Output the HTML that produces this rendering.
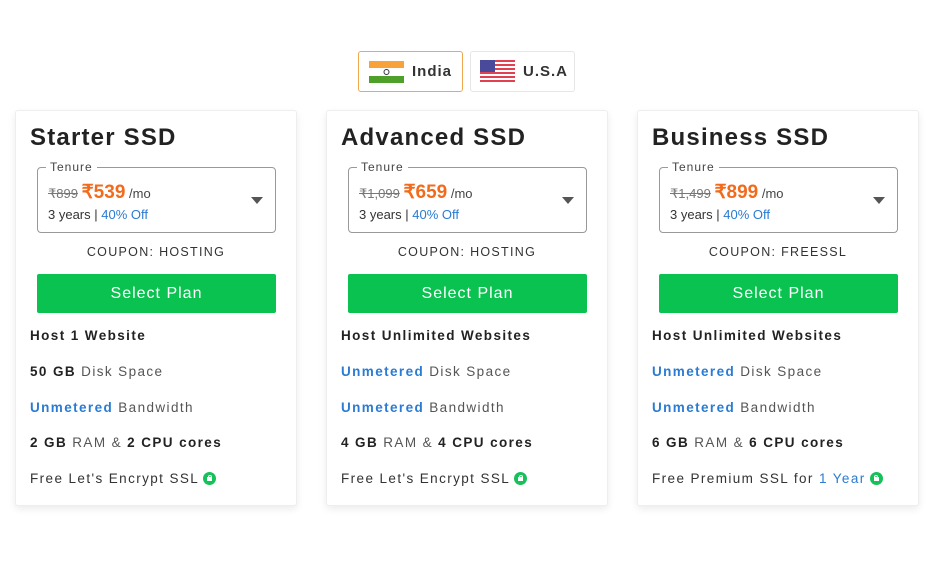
<!DOCTYPE html>
<html><head><style>
*{box-sizing:border-box;margin:0;padding:0}
body{width:936px;height:569px;background:#fff;font-family:"Liberation Sans",sans-serif;color:#222;position:relative;overflow:hidden}
.tab{position:absolute;top:51px;height:41px;border:1px solid #e6e6e6;border-radius:3px;display:flex;align-items:center;font-size:15px;font-weight:bold;color:#333;letter-spacing:1px}
.card{position:absolute;top:110px;width:282px;height:396px;border:1px solid #eee;border-radius:3px;box-shadow:0 3px 8px rgba(0,0,0,.08);background:#fff}
.card h2{position:absolute;left:14px;top:13px;font-size:24px;font-weight:bold;color:#222;letter-spacing:1.2px}
.ten{position:absolute;left:21px;top:56px;width:239px;height:66px;border:1px solid #999;border-radius:4px}
.ten .lab{position:absolute;left:8px;top:-8px;background:#fff;padding:0 4px;font-size:12px;color:#444;letter-spacing:1px}
.ten .pr{position:absolute;left:10px;top:13px;font-size:13px;color:#444}
.ten .pr s{color:#777}
.ten .pr b{color:#f26b1d;font-size:19px}
.ten .yr{position:absolute;left:10px;top:39px;font-size:13px;color:#333}
.ten .yr span{color:#2a7bd3}
.ten .ar{position:absolute;right:12px;top:29px;width:0;height:0;border-left:6px solid transparent;border-right:6px solid transparent;border-top:7px solid #555}
.cp{position:absolute;left:0;width:100%;top:134px;text-align:center;font-size:12.5px;letter-spacing:1.3px;color:#333}
.btn{position:absolute;left:21px;top:163px;width:239px;height:39px;background:#0ac24f;border-radius:2px;color:#fff;font-size:16px;text-align:center;line-height:39px;letter-spacing:1px}
.f{position:absolute;left:14px;font-size:13.5px;letter-spacing:1.4px;color:#555}
.f b{color:#222}
.f .u{color:#2a7bd3;font-weight:bold}
.f .l{color:#2a7bd3}
.lock{display:inline-block;width:13px;height:13px;border-radius:50%;background:#16c05a;vertical-align:-2px;margin-left:4px;position:relative}
.lock:after{content:"";position:absolute;left:4px;top:5px;width:5px;height:4px;background:#fff}
.lock:before{content:"";position:absolute;left:4.5px;top:2.5px;width:2px;height:3px;border:1px solid #fff;border-bottom:none;border-radius:2px 2px 0 0}
</style></head><body>
<div class="tab" style="left:358px;width:105px;border-color:#f0a850">
<svg style="margin:0 8px 0 10px" width="35" height="22"><rect width="35" height="7" fill="#f7a23a"/><rect y="7" width="35" height="8" fill="#fff"/><rect y="15" width="35" height="7" fill="#4fa02a"/><circle cx="17.5" cy="11" r="2.5" fill="none" stroke="#334" stroke-width="1"/></svg>India</div>
<div class="tab" style="left:470px;width:105px">
<svg style="margin:0 8px 0 9px" width="35" height="23"><g fill="#e04050"><rect y="0" width="35" height="2"/><rect y="4" width="35" height="2"/><rect y="8" width="35" height="2"/><rect y="12" width="35" height="2"/><rect y="16" width="35" height="2"/><rect y="20" width="35" height="2"/></g><rect width="15" height="12" fill="#4a4a9a"/></svg>U.S.A</div>

<div class="card" style="left:15px"><h2>Starter SSD</h2>
<div class="ten"><span class="lab">Tenure</span><div class="pr"><s>₹899</s> <b>₹539</b> /mo</div><div class="yr">3 years | <span>40% Off</span></div><div class="ar"></div></div>
<div class="cp">COUPON: HOSTING</div><div class="btn">Select Plan</div>
<div class="f" style="top:217px"><b>Host 1 Website</b></div>
<div class="f" style="top:253px"><b>50 GB</b> Disk Space</div>
<div class="f" style="top:289px"><span class="u">Unmetered</span> Bandwidth</div>
<div class="f" style="top:324px"><b>2 GB</b> RAM &amp; <b>2 CPU cores</b></div>
<div class="f" style="top:360px;color:#333">Free Let's Encrypt SSL<span class="lock"></span></div></div>

<div class="card" style="left:326px"><h2>Advanced SSD</h2>
<div class="ten"><span class="lab">Tenure</span><div class="pr"><s>₹1,099</s> <b>₹659</b> /mo</div><div class="yr">3 years | <span>40% Off</span></div><div class="ar"></div></div>
<div class="cp">COUPON: HOSTING</div><div class="btn">Select Plan</div>
<div class="f" style="top:217px"><b>Host Unlimited Websites</b></div>
<div class="f" style="top:253px"><span class="u">Unmetered</span> Disk Space</div>
<div class="f" style="top:289px"><span class="u">Unmetered</span> Bandwidth</div>
<div class="f" style="top:324px"><b>4 GB</b> RAM &amp; <b>4 CPU cores</b></div>
<div class="f" style="top:360px;color:#333">Free Let's Encrypt SSL<span class="lock"></span></div></div>

<div class="card" style="left:637px"><h2>Business SSD</h2>
<div class="ten"><span class="lab">Tenure</span><div class="pr"><s>₹1,499</s> <b>₹899</b> /mo</div><div class="yr">3 years | <span>40% Off</span></div><div class="ar"></div></div>
<div class="cp">COUPON: FREESSL</div><div class="btn">Select Plan</div>
<div class="f" style="top:217px"><b>Host Unlimited Websites</b></div>
<div class="f" style="top:253px"><span class="u">Unmetered</span> Disk Space</div>
<div class="f" style="top:289px"><span class="u">Unmetered</span> Bandwidth</div>
<div class="f" style="top:324px"><b>6 GB</b> RAM &amp; <b>6 CPU cores</b></div>
<div class="f" style="top:360px;color:#333">Free Premium SSL for <span class="l">1 Year</span><span class="lock"></span></div></div>
</body></html>
